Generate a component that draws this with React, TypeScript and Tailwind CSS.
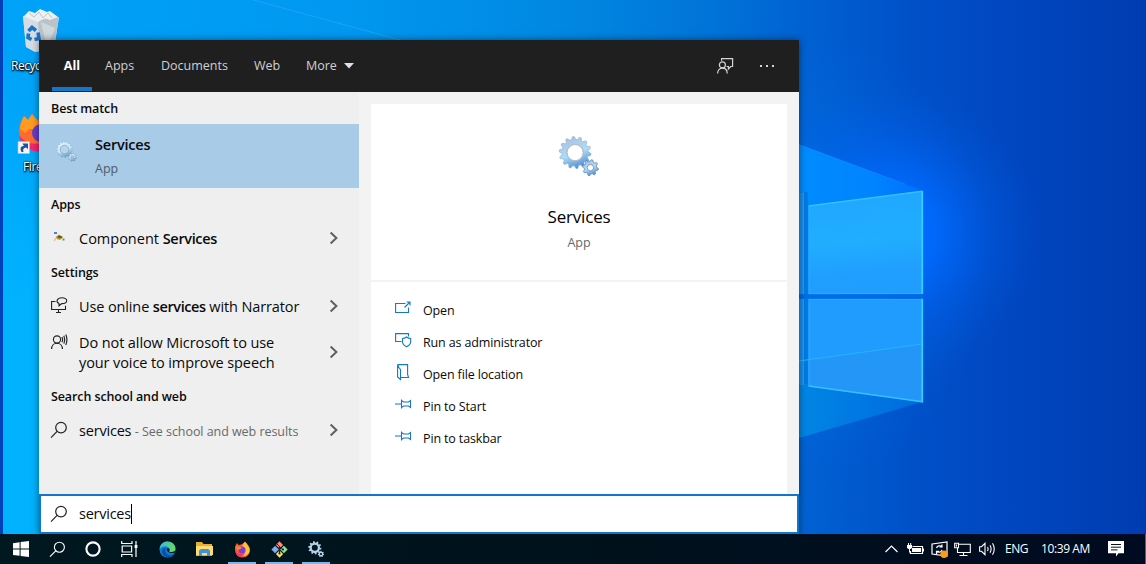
import React from "react";

const ui = "font-['Open_Sans','Noto_Sans',sans-serif]";

function gearPath(cx: number, cy: number, outer: number, inner: number, teeth: number, hole: number) {
  const pts: string[] = [];
  const n = teeth * 4;
  for (let i = 0; i < n; i++) {
    const a = ((i + 0.5) / n) * Math.PI * 2;
    const r = i % 4 < 2 ? outer : inner;
    pts.push(`${(cx + r * Math.cos(a)).toFixed(2)} ${(cy + r * Math.sin(a)).toFixed(2)}`);
  }
  return `M${pts.join("L")}Z M${cx - hole} ${cy}a${hole} ${hole} 0 1 0 ${hole * 2} 0a${hole} ${hole} 0 1 0 ${-hole * 2} 0Z`;
}

function Gears({ className, id, pale }: { className: string; id: string; pale?: boolean }) {
  return (
    <svg className={className} viewBox="0 0 42 42">
      <defs>
        <linearGradient id={id} x1="0.2" y1="0" x2="0.6" y2="1">
          <stop offset="0" stopColor={pale ? "#e8f2f8" : "#a9bfdd"} />
          <stop offset="0.55" stopColor={pale ? "#cdeaf8" : "#addcf8"} />
          <stop offset="1" stopColor={pale ? "#5f8fbd" : "#4d8bd5"} />
        </linearGradient>
      </defs>
      <path d={gearPath(17, 17, 16.4, 13.6, 14, 8.2)} fill={`url(#${id})`} fillRule="evenodd" stroke={pale ? "#7fa5c6" : "#8fa9c6"} strokeWidth="0.6" />
      <circle cx="17" cy="17" r="8.6" fill={pale ? "#b4d5ee" : "none"} stroke={pale ? "#7799b6" : "#b4bec9"} strokeWidth="1" />
      <path d={gearPath(32.7, 32.5, 8.2, 6.3, 8, 3.3)} fill={`url(#${id})`} fillRule="evenodd" stroke="#58799e" strokeWidth="0.7" />
    </svg>
  );
}

function Magnifier({ className }: { className: string }) {
  return (
    <svg className={className} viewBox="0 0 18 18" fill="none" stroke="currentColor" strokeWidth="1.2">
      <circle cx="11" cy="6.6" r="5.3" />
      <path d="M7.1 10.4L1 16.6" />
    </svg>
  );
}

function Chevron() {
  return (
    <svg className="h-3.5 w-2.5 shrink-0 text-[#606060]" viewBox="0 0 10 14" fill="none" stroke="currentColor" strokeWidth="2">
      <path d="M1.6 1.4L7.4 6.9L1.6 12.4" />
    </svg>
  );
}

function Heading({ children }: { children: React.ReactNode }) {
  return (
    <div className="flex h-8 items-center pt-0.5 pl-3 text-[12.5px] font-semibold tracking-[-0.1px] text-[#0a0a0a]">{children}</div>
  );
}

function Row({ icon, children, tall }: { icon: React.ReactNode; children: React.ReactNode; tall?: boolean }) {
  return (
    <div className={`flex pr-5 pl-3 ${tall ? "h-14" : "h-9"}`}>
      <div className="flex h-9 w-7 items-center">{icon}</div>
      <div className="flex flex-1 items-center pt-0.5 text-[14.5px] leading-5 whitespace-nowrap text-[#0a0a0a]">{children}</div>
      <div className="flex items-center">
        <Chevron />
      </div>
    </div>
  );
}

function Wallpaper() {
  return (
    <svg className="absolute inset-0 h-full w-full" viewBox="0 0 1146 564" preserveAspectRatio="none">
      <defs>
        <linearGradient id="sky" x1="0" x2="1146" y1="0" y2="0" gradientUnits="userSpaceOnUse">
          <stop offset="0" stopColor="#00a3f9" />
          <stop offset="0.3" stopColor="#0098f0" />
          <stop offset="0.5" stopColor="#0087e2" />
          <stop offset="0.62" stopColor="#0074d8" />
          <stop offset="0.7" stopColor="#0062d2" />
          <stop offset="0.8" stopColor="#0050c8" />
          <stop offset="0.9" stopColor="#0045be" />
          <stop offset="1" stopColor="#003cb0" />
        </linearGradient>
        <linearGradient id="leftglow" x1="0" x2="0" y1="60" y2="300" gradientUnits="userSpaceOnUse">
          <stop offset="0" stopColor="#00b2ff" stopOpacity="0" />
          <stop offset="1" stopColor="#00b2ff" />
        </linearGradient>
        <radialGradient id="glow" cx="0" cy="0" r="1" gradientUnits="userSpaceOnUse" gradientTransform="translate(890 232) scale(150 150)">
          <stop offset="0" stopColor="#0070ff" />
          <stop offset="0.3" stopColor="#006aff" stopOpacity="0.9" />
          <stop offset="0.65" stopColor="#0060ee" stopOpacity="0.4" />
          <stop offset="1" stopColor="#0058dd" stopOpacity="0" />
        </radialGradient>
        <radialGradient id="glowWide" cx="0" cy="0" r="1" gradientUnits="userSpaceOnUse" gradientTransform="translate(790 260) scale(200 230)">
          <stop offset="0" stopColor="#0080f0" stopOpacity="0.9" />
          <stop offset="0.5" stopColor="#0070e8" stopOpacity="0.5" />
          <stop offset="1" stopColor="#0060dd" stopOpacity="0" />
        </radialGradient>
        <linearGradient id="beam" x1="799" x2="922" y1="0" y2="0" gradientUnits="userSpaceOnUse">
          <stop offset="0" stopColor="#008cff" />
          <stop offset="0.6" stopColor="#0084ff" />
          <stop offset="1" stopColor="#0070ff" />
        </linearGradient>
        <linearGradient id="beamLow" x1="799" x2="922" y1="0" y2="0" gradientUnits="userSpaceOnUse">
          <stop offset="0" stopColor="#0086e4" />
          <stop offset="1" stopColor="#0070e4" stopOpacity="0.8" />
        </linearGradient>
        <linearGradient id="pane" x1="0.2" x2="0.3" y1="0" y2="1">
          <stop offset="0" stopColor="#20a6ff" />
          <stop offset="0.5" stopColor="#20aeff" />
          <stop offset="0.8" stopColor="#209fff" />
          <stop offset="1" stopColor="#209dff" />
        </linearGradient>
      </defs>
      <rect width="1146" height="564" fill="url(#sky)" />
      <rect width="60" height="564" fill="url(#leftglow)" />
      <rect x="560" y="0" width="440" height="534" fill="url(#glowWide)" />
      <rect x="720" y="60" width="340" height="340" fill="url(#glow)" />
      <path d="M250 -1L400 40" stroke="#27a9f5" strokeOpacity="0.7" strokeWidth="1" />
      <path d="M799 144.5L922 190.5L922 300H799Z" fill="url(#beam)" />
      <path d="M799 144.5L905 184" stroke="#2a9cff" strokeOpacity="0.35" />
      <path d="M799 300H922V402L799 438Z" fill="url(#beamLow)" />
      <path d="M799 192H808V384H799Z" fill="#0079e4" />
      <path d="M799 192.500H804V294H799ZM799 299H804V385H799Z" fill="#168fee" />
      <path d="M803.500 192.500V294M803.500 299V385" stroke="#1f9df5" />
      <path d="M808.500 191.500H922V206H808.500Z" fill="none" />
      <path d="M808.500 206L922 191V294H808.500Z" fill="url(#pane)" />
      <path d="M808.500 299H922V402L808.500 386Z" fill="#209bff" />
      <path d="M808.500 360L922 344V402L808.500 386Z" fill="#2496f7" />
      <path d="M799 361L922 344" stroke="#22b6ff" strokeWidth="1.2" />
      <path d="M809 206V293.500H922M809 386V299.500H922" fill="none" stroke="#2eaeff" strokeWidth="0.8" />
      <path d="M808.500 206L922.500 191.300M808.500 386L922.500 401.800" stroke="#36c0ff" strokeWidth="1.4" />
      <path d="M922.300 191V294M922.300 298.500V402.400" stroke="#36d0ff" strokeWidth="1.7" />
      <path d="M799 296.500H923" stroke="#006ae4" strokeWidth="4" />
      <path d="M0 0H3V564H0Z" fill="#0040b8" />
      <path d="M1145 0H1146V534H1145Z" fill="#073793" />
    </svg>
  );
}

function DesktopIcons() {
  return (
    <div className={`absolute top-2 left-[3px] w-[74px] text-[12px] text-white [text-shadow:0_1px_2px_#000,1px_1px_2px_#000,0_0_2px_#000] ${ui}`}>
      <svg className="ml-[18px] h-[46px] w-10" viewBox="0 0 40 46">
        <path d="M2 8L5 39L14 44L33 40L38 9Z" fill="#dfe5ea" />
        <path d="M2 8L17 12L18 44L5 39Z" fill="#d5dce2" />
        <path d="M17 12L38 9L33 40L18 44Z" fill="#b9c3ca" />
        <path d="M20 14L26 40L34 20Z" fill="#dbe1e5" fillOpacity=".7" />
        <path d="M3 8L8 3L14 5L19 1L26 4L29 3L37 9L29 12L24 10L17 14L9 11Z" fill="#edf0f2" />
        <path d="M8 5L13 9L18 4L22 10L27 5L31 10" fill="none" stroke="#bcc5cb" />
        <g fill="none" stroke="#1973c9" strokeWidth="3.6">
          <path d="M7.500 23L11 19.500L15 22.500" />
          <path d="M17 24.500L18 30.500L13.500 31.500" />
          <path d="M10.500 31.500L7 29.500L7.500 25.500" />
        </g>
      </svg>
      <div className="mt-[3px] ml-2 w-7 overflow-hidden tracking-[-0.5px]">Recyc</div>
      <svg className="mt-9 ml-[13px] h-[44px] w-12" viewBox="0 0 48 44">
        <path d="M3 22C2 15 6 9 8 5L12 9L16 3L21 9C30 6 41 10 42 24C42 34 34 41 25 41C14 41 4 35 3 22Z" fill="#ff6a2e" />
        <path d="M8 5L12 9L16 3L22 10L24 18L13 18L9 22L4 18C4 13 6 9 8 5Z" fill="#ff9a22" />
        <circle cx="25" cy="22" r="9" fill="#653dcb" />
        <path d="M3 24C8 32 18 35 28 31L26 41C14 41 5 35 3 24Z" fill="#f4256f" />
        <path d="M2 30.500H13.500V42.500H2Z" fill="#f4f4f4" stroke="#bbb" strokeWidth=".6" />
        <path d="M5.500 41C3.500 37 5 35 8 35L6.500 32.500H12V38L10 36.500C7.500 37 6.500 38.500 7.500 41Z" fill="#16549e" />
      </svg>
      <div className="mt-[3px] ml-5 w-4 overflow-hidden tracking-[-0.4px] whitespace-nowrap">Fire</div>
    </div>
  );
}

function Header() {
  return (
    <header className="flex h-[52px] bg-[#1f1f1f] text-[12.5px] text-[#d0d0d0]">
      <div className="mb-px ml-[13px] flex w-10 items-center justify-center border-t-4 border-b-4 border-t-transparent border-b-[#1177cc] pt-px font-bold text-white">All</div>
      <div className="flex flex-1 items-center pt-px">
        <span className="ml-[13px] w-14">Apps</span>
        <span className="w-[93px]">Documents</span>
        <span className="w-[52px]">Web</span>
        <span className="w-[38px]">More</span>
        <svg className="mb-px h-[6px] w-[10px]" viewBox="0 0 10 6"><path d="M0 0H10L5 5.5Z" fill="#e0e0e0" /></svg>
      </div>
      <div className="mr-6 flex items-center gap-[25px]">
        <svg className="h-[18px] w-[18px]" viewBox="0 0 18 18" fill="none" stroke="#d5d5d5" strokeWidth="1.2">
          <circle cx="6.4" cy="7.9" r="3" />
          <path d="M1.6 16.500C1.6 13.200 3.6 11.200 6.4 11.200S11.2 13.200 11.2 16.500M5.6 3.800V1.6H16.6V9.500H14.800L12.4 12V9.500H10.6" />
        </svg>
        <svg className="mb-px h-1 w-4" viewBox="0 0 16 4" fill="#d5d5d5"><path d="M1 1H3V3H1ZM7 1H9V3H7ZM13 1H15V3H13Z" /></svg>
      </div>
    </header>
  );
}

function ResultList() {
  return (
    <section className="w-80 bg-[#efefef]">
      <Heading>Best match</Heading>
      <div className="flex h-16 bg-[#a8cbe8] pl-4">
        <div className="w-10 pt-[17px]"><Gears className="ml-px h-[21px] w-[21px]" id="g-small" pale /></div>
        <div className="pt-[9px]">
          <div className="text-[14.5px] leading-6 font-semibold tracking-[-0.2px] text-[#0a0a0a]">Services</div>
          <div className="text-[12.5px] leading-6 text-[#505b64]">App</div>
        </div>
      </div>
      <Heading>Apps</Heading>
      <Row
        icon={
          <svg className="mb-[3px] ml-0.5 h-3 w-3" viewBox="0 0 12 12">
            <path d="M1 1H4V3H1Z" fill="#4e7fd0" />
            <path d="M1 10L4.500 5" stroke="#e3b5b2" strokeWidth="1.3" />
            <path d="M3 6L6 3.500L10 6L7 9L4 8Z" fill="#b99320" />
            <path d="M5 5.500L9 6.500" stroke="#594a22" strokeWidth="1.3" />
            <path d="M9.500 7.500H11.500V9.500H9.500Z" fill="#3fa854" />
          </svg>
        }
      >
        <span>Component <b className="font-semibold tracking-[-0.35px]">Services</b></span>
      </Row>
      <Heading>Settings</Heading>
      <Row
        icon={
          <svg className="h-[18px] w-[18px]" viewBox="0 0 18 18" fill="none" stroke="#222" strokeWidth="1.1">
            <path d="M4.500 4.500H.6V12.500H14.500V8.800M7.500 12.500V15.500M5 15.500H10" />
            <path d="M8 8.800V6.600C4.500 4.800 6 .7 10.800 .7C17.400 .7 17.300 6.600 10.800 6.600Z" />
          </svg>
        }
      >
        <span className="tracking-[-0.12px]">Use online <b className="font-semibold tracking-[-0.4px]">services</b> with Narrator</span>
      </Row>
      <Row
        tall
        icon={
          <svg className="h-[18px] w-[18px]" viewBox="0 0 18 18" fill="none" stroke="#222" strokeWidth="1.15">
            <circle cx="6" cy="6.500" r="3.6" />
            <path d="M.6 16C.6 12.500 2.900 10.200 6 10.200S11.400 12.500 11.400 16M11 4C11.800 5.800 11.800 7.500 11 9.200M12.900 2.700C14 5.400 14 8 12.900 10.600M14.800 1.500C16.300 5 16.300 8.500 14.800 12" />
          </svg>
        }
      >
        <span className="tracking-[-0.1px]">Do not allow Microsoft to use<br />your voice to improve speech</span>
      </Row>
      <Heading>Search school and web</Heading>
      <Row icon={<Magnifier className="-ml-px h-[18px] w-[18px] text-[#222]" />}>
        <span className="tracking-[-0.2px]">services <span className="text-[12.5px] tracking-[-0.05px] text-[#696969]">- See school and web results</span></span>
      </Row>
    </section>
  );
}

const pin = "M0 8H6M6.500 3.500V12.500M6.500 4.500L8.500 6H13.500L15.500 4.500V11.500L13.500 10H8.500L6.500 11.500";

const actions = [
  { label: "Open", d: "M10.500 3.500H.6V12.500H13.500V7.500M9.500 7.500L15 2M11.500 2H15V5.500" },
  { label: "Run as administrator", d: "M6.500 9.500H.6V1.600H13.500V4.500M7.500 6.500C9.500 6.500 10.500 5.800 11.500 5C12.500 5.800 14 6.500 15.700 6.500V9.500C15.700 12.300 14 13.700 11.500 14.800C9.300 13.700 7.500 12.300 7.500 9.500Z" },
  { label: "Open file location", d: "M2.600 .6H12.600V10.500L13.500 13.500H5.500M2.600 .6V13L5.500 15.500V5.500Q4 4.500 2.600 .6" },
  { label: "Pin to Start", d: pin },
  { label: "Pin to taskbar", d: pin },
];

function Details() {
  return (
    <section className="flex flex-1 flex-col bg-[#f3f3f3] px-3 pt-3">
      <div className="flex h-44 flex-col items-center bg-white pt-8">
        <Gears className="h-[41px] w-[42px]" id="g-large" />
        <div className="mt-[26px] text-[17px] leading-7 tracking-[-0.2px] text-black">Services</div>
        <div className="text-[12.5px] leading-6 text-[#696969]">App</div>
      </div>
      <div className="mt-0.5 flex-1 bg-white pt-3">
        {actions.map((a) => (
          <div key={a.label} className="flex h-8 items-center pl-6 text-[12.5px] text-[#0a0a0a]">
            <svg className="mr-[11px] mb-[3px] h-[17px] w-[17px]" viewBox="0 0 17 17" fill="none" stroke="#1477c8" strokeWidth="1.1"><path d={a.d} /></svg>
            <span className="pt-0.5 tracking-[-0.14px]">{a.label}</span>
          </div>
        ))}
      </div>
    </section>
  );
}

function SearchPanel() {
  return (
    <main className="relative ml-[39px] flex h-[494px] w-[760px] flex-col shadow-[0_0_7px_rgba(0,0,0,0.5)]">
      <Header />
      <div className="flex flex-1">
        <ResultList />
        <Details />
      </div>
      <div className="flex h-10 items-center border-2 border-[#1177cc] bg-white pl-[9px] text-[14.5px]">
        <Magnifier className="mr-[11px] h-[18px] w-[18px] text-[#222]" />
        <span className="tracking-[-0.25px] text-[#0a0a0a]">services</span>
        <span className="h-5 w-px bg-black" />
      </div>
    </main>
  );
}

function Taskbar() {
  return (
    <footer className="relative flex h-[30px] items-center bg-linear-to-r from-[#001820] via-[#00121c] to-[#000a20] text-[12px] text-white">
      <svg className="ml-[13px] h-4 w-4" viewBox="0 0 16 16" fill="#fff"><path d="M0 2.2L6.6 1.2V7.4H0ZM7.6 1L16 0V7.4H7.6ZM0 8.5H6.6V14.8L0 13.9ZM7.6 8.5H16V16L7.6 15Z" /></svg>
      <Magnifier className="ml-5 h-[17px] w-[17px]" />
      <svg className="ml-[19px] h-4 w-4" viewBox="0 0 16 16"><circle cx="8" cy="8" r="6.6" fill="none" stroke="#fff" strokeWidth="2.1" /></svg>
      <svg className="ml-5 h-4 w-[17px]" viewBox="0 0 17 16" fill="none" stroke="#fff" strokeWidth="1.2"><path d="M.7 0V2.5H11V0M.7 16V13.5H11V16M1.2 5H10.6V11H1.2ZM15 0V16" /><path d="M13.6 4H16.4V7H13.6Z" fill="#fff" stroke="none" /></svg>
      <svg className="ml-[21px] h-[17px] w-[17px]" viewBox="0 0 17 17">
        <defs><linearGradient id="edge" x1="0" x2="1" y1="0" y2=".4"><stop stopColor="#30b4f0" /><stop offset="1" stopColor="#65dc65" /></linearGradient></defs>
        <circle cx="8.5" cy="8.5" r="8" fill="#1279d1" />
        <path d="M.6 8C1 3 4.5.5 8.5.5C13 .5 16.5 3.8 16.5 7.5C16.5 10.5 13.8 11.3 11 11C9.5 10.8 10.6 10 10.6 8.6C10.6 5.5 5 3.5.6 8Z" fill="url(#edge)" />
        <path d="M7 7C5 10 7 14 12 14.5L15 13C11.5 18 4 16.5 3 11C2.6 9 4.3 7.2 7 7Z" fill="#0750a4" />
        <path d="M8 7.5C7.5 9 8 12.5 15.5 12L16 10C14 11.2 12.3 11.2 11 11C9.5 10.8 10.6 10 10.6 8.6C10.5 7.8 9 7 8 7.5Z" fill="#001820" />
      </svg>
      <svg className="ml-5 h-4 w-[17px]" viewBox="0 0 17 16"><path d="M0 1H6L7.5 3H16V15H0Z" fill="#e8ae35" /><path d="M0 5H17V14H0Z" fill="#ffdb73" /><path d="M3 15V9.5L5 8H12L14 9.5V15H11V12H6V15Z" fill="#4093d4" /></svg>
      <div className="ml-[15px] flex h-full w-7 items-center justify-center border-t-2 border-b-2 border-t-transparent border-b-[#76b9ed]">
        <svg className="h-[17px] w-[17px]" viewBox="0 0 17 17">
          <path d="M1 8C.7 5 2 3.8 3 2L4.5 4L8 3.3L11 .5C12.5 2.5 15.5 4.5 16 8.5C16.3 13 13 16.5 8.5 16.5S1.2 13 1 8Z" fill="#ff592d" />
          <path d="M10 2L11.5 1C13 4 15.5 5.5 15.5 9C15.5 13 12 15 9 15C12 13 12 8 8 5Z" fill="#ffc33c" />
          <circle cx="8" cy="9" r="3.6" fill="#7940cf" />
          <path d="M1.3 10C3 13 6 14 9 12.5C8 15 6 16 5 15.6C3 14.6 1.6 12.5 1.3 10Z" fill="#f5306f" />
          <path d="M2 5L8 6.5L6 8.3L3 9Z" fill="#ff8b21" />
        </svg>
      </div>
      <div className="ml-[9px] flex h-full w-7 items-center justify-center border-t-2 border-b-2 border-t-transparent border-b-[#76b9ed]">
        <svg className="h-[17px] w-[17px]" viewBox="0 0 17 17">
          <path d="M8.5 .3L12.1 3.9L8.5 7.5L4.9 3.9Z" fill="#ff8b7b" /><path d="M4.1 4.8L7.8 8.5L4.1 12.2L.4 8.5Z" fill="#79aef6" /><path d="M12.9 4.8L16.6 8.5L12.9 12.2L9.2 8.5Z" fill="#8de293" /><path d="M8.5 9.4L12.1 13L8.5 16.7L4.9 13Z" fill="#ffe16b" />
          <path d="M6 3L10.3 7.3M8.5 6V12.5M9 6.8L12 8.5" stroke="#132935" strokeWidth="1" />
          <circle cx="8.5" cy="12.4" r="1.1" fill="#132935" /><circle cx="12" cy="8.5" r="1.1" fill="#132935" />
        </svg>
      </div>
      <div className="ml-[9px] flex h-full w-7 items-center justify-center border-t-2 border-b-2 border-t-transparent border-b-[#76b9ed]">
        <svg className="h-4 w-4" viewBox="0 0 16 16" fill="#b4d3e9" fillRule="evenodd"><path d={gearPath(6.8, 6.8, 6.7, 5.1, 10, 3)} /><path d={gearPath(13, 13, 3.2, 2.4, 7, 1.1)} /></svg>
      </div>
      <div className="flex-1" />
      <svg className="h-2 w-[13px]" viewBox="0 0 13 8" fill="none" stroke="#fff" strokeWidth="1.2"><path d="M.5 7L6.5 1L12.5 7" /></svg>
      <svg className="ml-[9px] h-3 w-[17px]" viewBox="0 0 17 12"><path d="M5.5 3.5H15.5V10.5H3.5V8" fill="none" stroke="#fff" strokeWidth="1.2" /><path d="M5 5H14V9H5ZM16 5.5H17V8.5H16ZM0 2H5V5L3.5 6H1.5L0 5ZM1 0H2V2H1ZM3.2 0H4.2V2H3.2ZM2 6H3V8.5H4V9.5H2Z" fill="#fff" /></svg>
      <svg className="ml-[7px] h-[17px] w-[17px]" viewBox="0 0 17 17" fill="none" stroke="#fff" strokeWidth="1.2"><path d="M1 3L16 1V15L1 13Z" /><path d="M5.5 7A3.3 3.3 0 0 1 11 5.8M11 3.5V6H8.5M11 8.8A3.3 3.3 0 0 1 5.8 10.5M5.5 13V10.4H8" /><circle cx="13" cy="13.2" r="3.7" fill="#ff9b16" stroke="none" /></svg>
      <svg className="ml-[6px] h-[15px] w-[17px]" viewBox="0 0 17 15" fill="none" stroke="#fff" strokeWidth="1.1"><path d="M5 2.2H16.3V10.5H3.5V6.2M9.5 10.5V13.4M5.5 13.5H13.5M.7 1.2H4.5V5.8H.7ZM2.5 2.5V4.5" /></svg>
      <svg className="ml-2 h-3.5 w-[17px]" viewBox="0 0 17 14" fill="none" stroke="#fff" strokeWidth="1.1"><path d="M.6 4.7H2.5L6 1.3V12.7L2.5 9.3H.6ZM8.5 5Q9.7 7 8.5 9M11 3.2Q13.2 7 11 10.8M13.5 1.3Q17 7 13.5 12.7" /></svg>
      <span className="ml-[9px] w-9 tracking-[-0.5px]">ENG</span>
      <span className="w-[67px] tracking-[-0.4px] whitespace-nowrap">10:39 AM</span>
      <svg className="mr-[21px] h-4 w-4" viewBox="0 0 16 16"><path d="M0 0H16V12.2H10.5L8 15.5V12.2H0Z" fill="#fff" /><path d="M3 3.5H13M3 6.2H13M3 8.9H9.5" stroke="#06121c" strokeWidth="1" /></svg>
      <span className="h-full w-px bg-[#56616d]" />
    </footer>
  );
}

export default function App() {
  return (
    <div className={`relative flex h-[564px] w-[1146px] flex-col overflow-hidden bg-[#0078d7] pt-10 ${ui}`}>
      <Wallpaper />
      <DesktopIcons />
      <SearchPanel />
      <Taskbar />
    </div>
  );
}
